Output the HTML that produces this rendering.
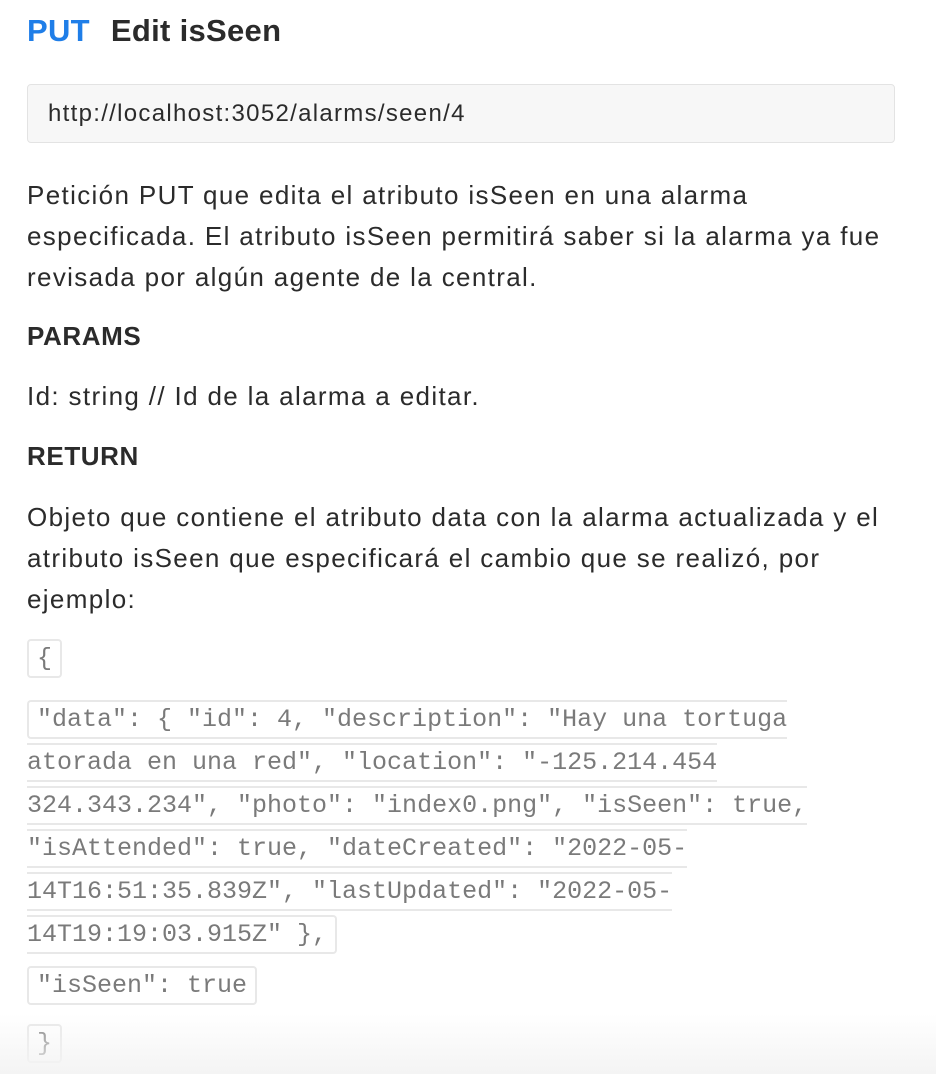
<!DOCTYPE html>
<html><head><meta charset="utf-8"><style>
body{margin:0;background:#fff;font-family:"Liberation Sans",sans-serif;color:#2b2b2b;width:936px;height:1074px;overflow:hidden;position:relative}
.w{position:absolute;left:27px;width:868px;top:0}
h1{margin:0;position:absolute;top:12px;font-size:31px;font-weight:bold;line-height:38px;white-space:nowrap;letter-spacing:0.3px}
h1 .m{color:#1f7ee8;margin-right:21px}
.url{position:absolute;top:84px;left:0;width:866px;height:57px;background:#f7f7f7;border:1px solid #e3e3e3;border-radius:4px;font-size:24px;letter-spacing:1.3px;line-height:57px;text-indent:20px;color:#2b2b2b}
p{margin:0;position:absolute;left:0;font-size:26px;letter-spacing:1.35px;line-height:41px;white-space:nowrap}
b{font-weight:bold;letter-spacing:0.6px}
code{font-family:"Liberation Mono",monospace;font-size:25px;letter-spacing:0;color:#7a7a7a;border:2px solid #e8e8e8;border-radius:4px;padding:3px 8px;background:#fff}
.fade{position:absolute;left:0;right:0;bottom:0;height:60px;background:linear-gradient(#fff0,#f4f4f4)}
</style></head><body>
<div class="w">
<h1><span class="m">PUT</span>Edit isSeen</h1>
<div class="url">http://localhost:3052/alarms/seen/4</div>
<p style="top:175px">Petición PUT que edita el atributo isSeen en una alarma<br>especificada. El atributo isSeen permitirá saber si la alarma ya fue<br>revisada por algún agente de la central.</p>
<p style="top:316px"><b>PARAMS</b></p>
<p style="top:376px">Id: string // Id de la alarma a editar.</p>
<p style="top:436px"><b>RETURN</b></p>
<p style="top:497px">Objeto que contiene el atributo data con la alarma actualizada y el<br>atributo isSeen que especificará el cambio que se realizó, por<br>ejemplo:</p>
<p style="top:636px"><code>{</code></p>
<p style="top:697px;left:0"><code>"data": { "id": 4, "description": "Hay una tortuga<br>atorada en una red", "location": "-125.214.454<br>324.343.234", "photo": "index0.png", "isSeen": true,<br>"isAttended": true, "dateCreated": "2022-05-<br>14T16:51:35.839Z", "lastUpdated": "2022-05-<br>14T19:19:03.915Z" },</code></p>
<p style="top:963px"><code>"isSeen": true</code></p>
<p style="top:1021px"><code>}</code></p>
</div>
<div class="fade"></div>
</body></html>
